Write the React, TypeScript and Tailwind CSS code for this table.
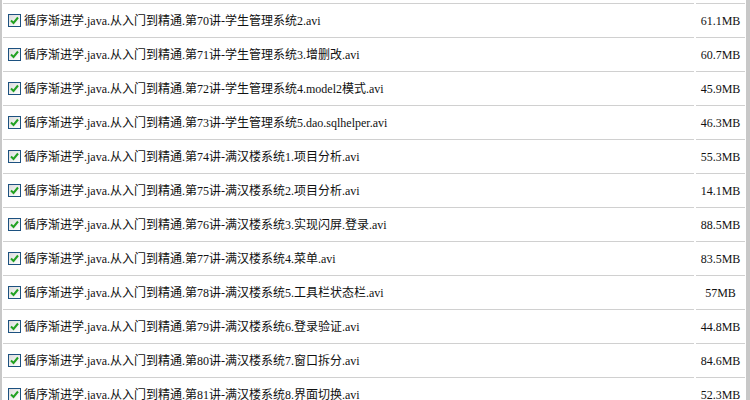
import React from 'react';

interface FileRow {
  no: number;
  title: string;
  size: string;
}

const rows: FileRow[] = [
  { no: 70, title: '学生管理系统2.avi', size: '61.1MB' },
  { no: 71, title: '学生管理系统3.增删改.avi', size: '60.7MB' },
  { no: 72, title: '学生管理系统4.model2模式.avi', size: '45.9MB' },
  { no: 73, title: '学生管理系统5.dao.sqlhelper.avi', size: '46.3MB' },
  { no: 74, title: '满汉楼系统1.项目分析.avi', size: '55.3MB' },
  { no: 75, title: '满汉楼系统2.项目分析.avi', size: '14.1MB' },
  { no: 76, title: '满汉楼系统3.实现闪屏.登录.avi', size: '88.5MB' },
  { no: 77, title: '满汉楼系统4.菜单.avi', size: '83.5MB' },
  { no: 78, title: '满汉楼系统5.工具栏状态栏.avi', size: '57MB' },
  { no: 79, title: '满汉楼系统6.登录验证.avi', size: '44.8MB' },
  { no: 80, title: '满汉楼系统7.窗口拆分.avi', size: '84.6MB' },
  { no: 81, title: '满汉楼系统8.界面切换.avi', size: '52.3MB' },
];

const CheckBox: React.FC = () => (
  <span className="w-[13px] h-[13px] shrink-0 border border-[#1c5180] bg-gradient-to-br from-[#dcdcdc] to-white flex items-center justify-center">
    <svg width="9" height="9" viewBox="0 0 9 9">
      <path d="M1 4.5 L3.5 7 L8 1.5" fill="none" stroke="#21a121" strokeWidth="2" />
    </svg>
  </span>
);

export default function App() {
  return (
    <div
      className="w-[750px] h-[400px] overflow-hidden bg-white flex text-[12px] text-[#111]"
      style={{ fontFamily: '"Liberation Serif", "Noto Sans CJK SC", serif' }}
    >
      <div className="w-[2px] bg-[#c8c8c8] shrink-0" />
      <div className="flex-1 pl-[1px] pt-[3px]">
        <div className="flex gap-[2px]">
          <div className="flex-1 border-t border-[#d0d0d0]" />
          <div className="w-[49px] border-t border-[#d0d0d0]" />
        </div>
        {rows.map((r) => (
          <div key={r.no} className="flex gap-[2px]">
            <div className="flex-1 h-[34px] border-b border-[#d0d0d0] flex items-center pl-[5px] gap-[3px] whitespace-nowrap">
              <CheckBox />
              <span>
                循序渐进学.java.从入门到精通.第{r.no}讲-{r.title}
              </span>
            </div>
            <div className="w-[49px] h-[34px] border-b border-[#d0d0d0] flex items-center justify-center whitespace-nowrap">
              {r.size}
            </div>
          </div>
        ))}
      </div>
      <div className="w-[1px] shrink-0" />
      <div className="w-[4px] bg-[#c8c8c8] shrink-0" />
    </div>
  );
}
